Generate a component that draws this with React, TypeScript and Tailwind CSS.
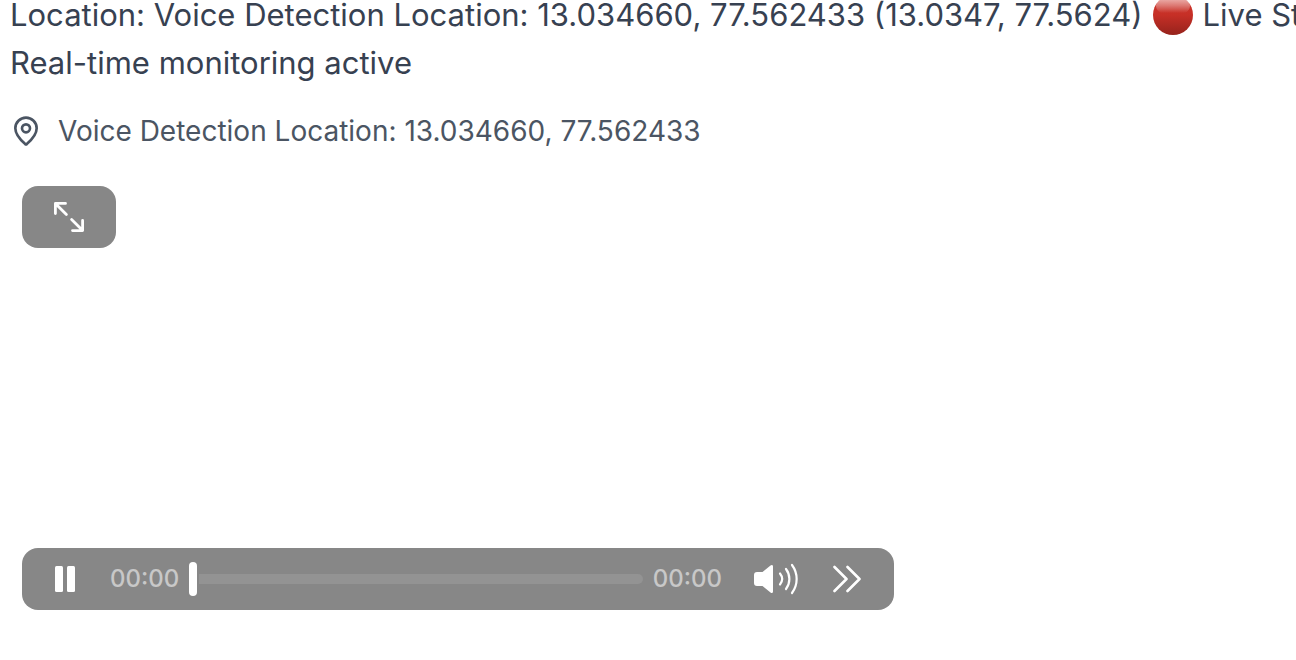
import { MapPin } from 'lucide-react';

function LiveDot() {
  return (
    <svg className="h-10 w-10 shrink-0" viewBox="0 0 40 40" role="img" aria-label="Live">
      <defs>
        <linearGradient id="dot" x1="0" y1="0" x2="0" y2="1">
          <stop offset="0" stopColor="#d03a30" />
          <stop offset="0.5" stopColor="#c62f26" />
          <stop offset="1" stopColor="#96231c" />
        </linearGradient>
        <linearGradient id="shine" x1="0" y1="0" x2="0" y2="1">
          <stop offset="0" stopColor="#fff" stopOpacity="0.7" />
          <stop offset="0.5" stopColor="#fff" stopOpacity="0.32" />
          <stop offset="0.85" stopColor="#fff" stopOpacity="0" />
        </linearGradient>
      </defs>
      <circle cx="20" cy="20" r="20" fill="url(#dot)" />
      <ellipse cx="20" cy="11" rx="17" ry="10" fill="url(#shine)" />
    </svg>
  );
}

function ExpandIcon() {
  return (
    <svg className="h-8 w-8" viewBox="0 0 32 32" fill="none" stroke="currentColor" strokeWidth="2.800" strokeLinecap="round" strokeLinejoin="round" aria-hidden="true">
      <path d="M2.400 12.500V2.400H12.500M2.400 2.400L13.400 13.400" />
      <path d="M29.600 19.500V29.600H19.500M29.600 29.600L18.600 18.600" />
    </svg>
  );
}

function PauseIcon() {
  return (
    <svg className="h-[26px] w-5" viewBox="0 0 20 26" fill="currentColor" aria-hidden="true">
      <rect width="8" height="26" rx="1.500" />
      <rect x="12" width="8" height="26" rx="1.500" />
    </svg>
  );
}

function VolumeIcon() {
  return (
    <svg className="h-8 w-11" viewBox="0 0 44 32" fill="none" stroke="currentColor" strokeWidth="2.200" strokeLinecap="round" aria-hidden="true">
      <path d="M3 9h5.500L16.500 2.400C17.700 1.400 19 1.900 19 3.400v25.200c0 1.500-1.300 2-2.500 1L8.500 23H3c-2 0-3-1-3-3v-8c0-2 1-3 3-3Z" fill="currentColor" stroke="none" />
      <path d="M26 10.500c2.800 3.500 2.800 7.500 0 11" />
      <path d="M32 6c4.500 6 4.500 14 0 20" />
      <path d="M38 2c6.200 8.500 6.200 19.500 0 28" />
    </svg>
  );
}

function MoreIcon() {
  return (
    <svg className="h-7 w-7" viewBox="0 0 28 28" fill="none" stroke="currentColor" strokeWidth="2.600" strokeLinecap="round" strokeLinejoin="round" aria-hidden="true">
      <path d="M1.500 2l12 12-12 12M14.500 2l12 12-12 12" />
    </svg>
  );
}

export default function App() {
  return (
    <main className="-mt-[9px] overflow-hidden bg-white pb-10 font-['Inter',sans-serif]">
      <div className="pl-2.5 text-[31px] leading-[48px] text-[#374151]">
        <p className="flex items-center gap-2.5 whitespace-nowrap">
          <span>Location: Voice Detection Location: 13.034660, 77.562433 (13.0347, 77.5624)</span>
          <LiveDot />
          <span>Live Stream</span>
        </p>
        <p>Real-time monitoring active</p>
      </div>

      <div className="mt-6 flex items-center gap-4 pl-2.5 text-[28px] leading-10 text-[#4b5563]">
        <MapPin className="h-8 w-8 shrink-0" aria-hidden="true" />
        <span>Voice Detection Location: 13.034660, 77.562433</span>
      </div>

      <section aria-label="Video player" className="mx-3 mt-[25px] flex min-h-[444px] max-w-[892px] flex-col items-start justify-between p-2.5 text-white">
        <button type="button" aria-label="Full screen" className="flex h-[62px] w-[94px] items-center justify-center rounded-2xl bg-[#878787]">
          <ExpandIcon />
        </button>

        <div className="flex h-[62px] w-full items-center rounded-2xl bg-[#878787] px-[33px]">
          <button type="button" aria-label="Pause" className="shrink-0">
            <PauseIcon />
          </button>
          <span className="ml-[35px] text-2xl font-medium text-[#c8c8c8]">00:00</span>
          <input
            type="range"
            min={0}
            max={100}
            defaultValue={0}
            aria-label="Seek"
            className="mx-2.5 h-[34px] min-w-0 flex-1 appearance-none bg-transparent [&::-webkit-slider-runnable-track]:h-2.5 [&::-webkit-slider-runnable-track]:rounded-full [&::-webkit-slider-runnable-track]:bg-[#939393] [&::-webkit-slider-thumb]:-mt-3 [&::-webkit-slider-thumb]:h-[34px] [&::-webkit-slider-thumb]:w-2 [&::-webkit-slider-thumb]:appearance-none [&::-webkit-slider-thumb]:rounded-full [&::-webkit-slider-thumb]:bg-white [&::-webkit-slider-thumb]:shadow-[0_0_0_2px_#878787]"
          />
          <span className="text-2xl font-medium text-[#c8c8c8]">00:00</span>
          <button type="button" aria-label="Volume" className="ml-8 shrink-0">
            <VolumeIcon />
          </button>
          <button type="button" aria-label="More controls" className="ml-[35px] shrink-0">
            <MoreIcon />
          </button>
        </div>
      </section>
    </main>
  );
}
